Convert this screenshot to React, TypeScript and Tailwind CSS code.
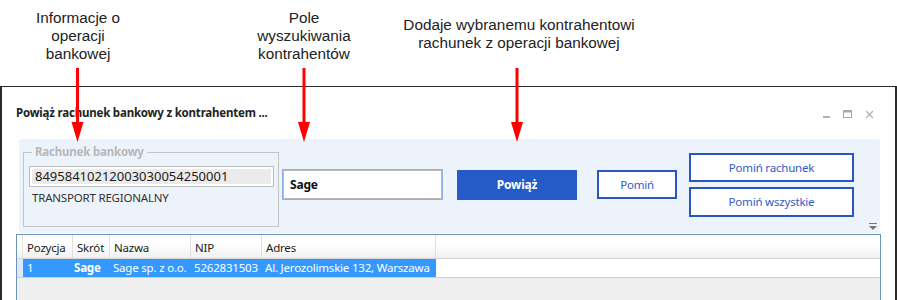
import React from "react";

const cols = [
  { name: "Pozycja", w: "w-[50px]" },
  { name: "Skrót", w: "w-[37px]" },
  { name: "Nazwa", w: "w-[81px]" },
  { name: "NIP", w: "w-[71px]" },
  { name: "Adres", w: "w-[174px]" },
];

function Arrow({ x }: { x: number }) {
  return (
    <g>
      <rect x={x - 1.5} y={68} width={3} height={56} fill="#ff0000" />
      <polygon points={`${x - 6},122 ${x + 6},122 ${x},142`} fill="#ff0000" />
    </g>
  );
}

export default function App() {
  return (
    <div className="relative w-[897px] h-[300px] overflow-hidden bg-white">
      {/* annotations */}
      <div className="flex h-[86px] font-['Liberation_Sans',Arial,sans-serif] text-[15.3px] leading-[18px] text-[#222]">
        <div className="w-[156px] pt-[9px] text-center">
          Informacje o<br />operacji<br />bankowej
        </div>
        <div className="ml-[74px] w-[148px] pt-[9px] text-center">
          Pole<br />wyszukiwania<br />kontrahentów
        </div>
        <div className="ml-[11px] w-[260px] pt-[16px] text-center">
          Dodaje wybranemu kontrahentowi<br />rachunek z operacji bankowej
        </div>
      </div>

      {/* window */}
      <div className="h-[214px] border-x-2 border-t border-[#2b2b2b] bg-white font-['Noto_Sans','Open_Sans',sans-serif] tracking-[-0.2px]">
        {/* title bar */}
        <div className="flex h-[52px] items-center pl-[14px] pr-[21px]">
          <div className="text-[11.5px] font-bold text-[#222] leading-none pb-[1px]">
            Powiąż rachunek bankowy z kontrahentem ...
          </div>
          <div className="ml-auto flex items-center gap-[12px] pt-[2px]">
            <svg width="9" height="9" viewBox="0 0 9 9">
              <rect x="1" y="6" width="7" height="2" fill="#b0b0b0" />
            </svg>
            <svg width="10" height="9" viewBox="0 0 10 9">
              <rect x="0.5" y="0.5" width="8" height="7" fill="none" stroke="#a8a8a8" />
              <rect x="0.5" y="0.5" width="8" height="2" fill="#a8a8a8" />
            </svg>
            <svg width="9" height="9" viewBox="0 0 9 9">
              <path d="M1 1 L8 8 M8 1 L1 8" stroke="#b0b0b0" strokeWidth="1.2" />
            </svg>
          </div>
        </div>

        {/* panel */}
        <div className="ml-[17px] flex h-[94px] w-[861px] items-start rounded-[3px] bg-[#edf3fb]">
          <fieldset className="ml-[4px] mt-[5px] h-[83px] w-[256px] border border-[#c4c4c4]">
            <legend className="ml-[8px] px-[3px] text-[11.5px] font-bold leading-[16px] text-[#b8b8b8]">
              Rachunek bankowy
            </legend>
            <div className="ml-[5px] mt-[6px] h-[21px] w-[245px] border border-[#bdbdbd] bg-white p-[2px]">
              <div className="flex h-full items-center bg-[#ebebeb] pl-[3px] text-[13px] leading-none tracking-normal text-[#1c1c1c]">
                84958410212003030054250001
              </div>
            </div>
            <div className="ml-[8px] mt-[3px] text-[11.5px] leading-[16px] text-[#333]">
              TRANSPORT REGIONALNY
            </div>
          </fieldset>

          <div className="ml-[3px] mt-[30px] flex h-[31px] w-[161px] items-center border border-[#8eb0ec] bg-white pl-[7px] shadow-[inset_0_0_0_1px_#b9b9b9] text-[12px] font-bold text-[#111]">
            Sage
          </div>

          <div className="ml-[14px] mt-[31px] flex h-[30px] w-[120px] items-center justify-center bg-[#245bc9] text-[12px] font-bold text-white">
            Powiąż
          </div>

          <div className="ml-[20px] mt-[31px] flex h-[29px] w-[80px] items-center justify-center border-2 border-[#2856c4] bg-white text-[11.5px] text-[#2e5bc8]">
            Pomiń
          </div>

          <div className="ml-[12px] mt-[14px] flex w-[165px] flex-col gap-[5px]">
            <div className="flex h-[29px] items-center justify-center border-2 border-[#2856c4] bg-white text-[11.5px] text-[#2e5bc8]">
              Pomiń rachunek
            </div>
            <div className="flex h-[30px] items-center justify-center border-2 border-[#2856c4] bg-white text-[11.5px] text-[#2e5bc8]">
              Pomiń wszystkie
            </div>
          </div>

          <div className="ml-auto mr-[3px] self-end mb-[3px]">
            <svg width="8" height="7" viewBox="0 0 8 7">
              <rect x="0" y="0" width="8" height="1" fill="#777" />
              <polygon points="0,3 8,3 4,7" fill="#777" />
            </svg>
          </div>
        </div>

        {/* table */}
        <div className="ml-[14px] mt-[1px] h-[70px] w-[865px] border border-[#6e93bb] bg-[#efefef] text-[11.5px] text-[#222]">
          <div className="flex h-[24px] border-b border-[#d5d5d5] bg-[linear-gradient(#ffffff_0%,#ffffff_40%,#f0f0f0_100%)]">
            <div className="w-[6px] border-r border-[#e6e6e6]" />
            {cols.map((c) => (
              <div
                key={c.name}
                className={`${c.w} flex items-center border-r border-[#e0e0e0] pl-[4px] pt-[2px]`}
              >
                {c.name}
              </div>
            ))}
            <div className="flex-1" />
          </div>
          <div className="flex h-[19px] border-b border-[#d0d0d0] bg-white text-white">
            <div className="w-[6px] bg-[#dcebfb]" />
            <div className="flex w-[413px] items-center whitespace-nowrap bg-[#3399ff]">
              <div className="w-[50px] pl-[4px]">1</div>
              <div className="w-[37px] pl-[1px] font-bold">Sage</div>
              <div className="w-[81px] pl-[3px]">Sage sp. z o.o.</div>
              <div className="w-[71px] pl-[3px]">5262831503</div>
              <div className="w-[174px] pl-[3px]">Al. Jerozolimskie 132, Warszawa</div>
            </div>
            <div className="flex-1" />
          </div>
        </div>
      </div>

      {/* annotation arrows */}
      <svg className="pointer-events-none absolute left-0 top-0" width="897" height="300">
        <Arrow x={77.5} />
        <Arrow x={304} />
        <Arrow x={517} />
      </svg>
    </div>
  );
}
